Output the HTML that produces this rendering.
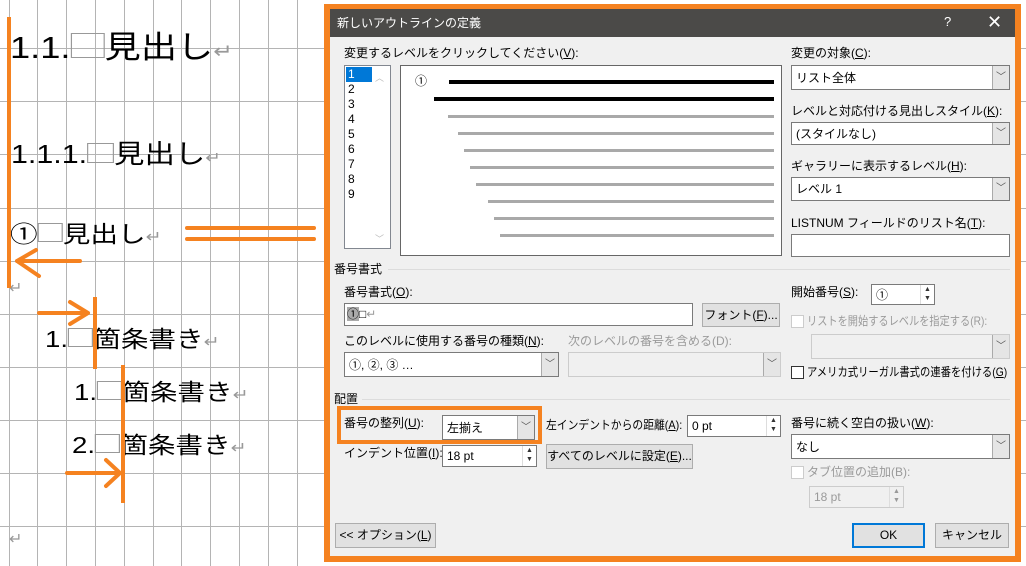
<!DOCTYPE html>
<html><head><meta charset="utf-8">
<style>
*{margin:0;padding:0;box-sizing:border-box}
body{width:1026px;height:566px;overflow:hidden;background:#fff;position:relative;font-family:"Liberation Sans","Noto Sans CJK JP",sans-serif}
.a{position:absolute}
.vl{position:absolute;top:0;width:1px;height:566px;background:#b4b4b4}
.hl{position:absolute;left:0;width:1026px;height:1px;background:#b4b4b4}
.o{position:absolute;background:#f58220}
.t{position:absolute;white-space:nowrap;line-height:1;color:#000;transform-origin:0 0}
.bx{display:inline-block;border:1px solid #999;vertical-align:baseline}
.rt{color:#999}
.d{position:absolute;font-size:12px;line-height:14px;white-space:nowrap;color:#000;transform-origin:0 0}
.dis{color:#9a9a9a}
.in{position:absolute;background:#fff;border:1px solid #7a7a7a}
.sel{position:absolute;background:#fff;border:1px solid #7a7a7a}
.sel .ar{position:absolute;right:0;top:0;bottom:0;width:17px;background:#e5e5e5;border-left:1px solid #aaa;font-size:10px;color:#555;text-align:center}
.sel .v{position:absolute;left:4px;top:50%;margin-top:-7px;font-size:12px;line-height:14px}
.btn{position:absolute;background:#e1e1e1;border:1px solid #adadad;font-size:12px;text-align:center}
.spin{position:absolute;background:#fff;border:1px solid #7a7a7a}
.spin .s{position:absolute;right:0;top:0;bottom:0;width:14px;border-left:1px solid #ddd;font-size:7px;line-height:9px;text-align:center;color:#333}
.cb{position:absolute;width:13px;height:13px;border:1px solid #333;background:#fff}
u{text-decoration:underline}
</style></head><body>
<!-- grid -->
<div class="vl" style="left:9px"></div><div class="vl" style="left:37px"></div><div class="vl" style="left:66px"></div><div class="vl" style="left:95px"></div><div class="vl" style="left:124px"></div><div class="vl" style="left:153px"></div><div class="vl" style="left:181px"></div><div class="vl" style="left:210px"></div><div class="vl" style="left:239px"></div><div class="vl" style="left:268px"></div><div class="vl" style="left:297px"></div>
<div class="hl" style="top:48px"></div><div class="hl" style="top:101px"></div><div class="hl" style="top:154px"></div><div class="hl" style="top:208px"></div><div class="hl" style="top:261px"></div><div class="hl" style="top:314px"></div><div class="hl" style="top:367px"></div><div class="hl" style="top:420px"></div><div class="hl" style="top:473px"></div><div class="hl" style="top:526px"></div>

<!-- left document text -->
<div class="t" style="left:10px;top:32px;font-size:31px;transform:scaleX(1.17)">1.1.<span class="bx" style="width:29px;height:25px"></span>見出し<span class="rt" style="font-size:20px">↵</span></div>
<div class="t" style="left:11px;top:141px;font-size:26px;transform:scaleX(1.17)">1.1.1.<span class="bx" style="width:23px;height:20px"></span>見出し<span class="rt" style="font-size:16px">↵</span></div>
<div class="t" style="left:10px;top:223px;font-size:23px;transform:scaleX(1.2)">①<span class="bx" style="width:21px;height:19px"></span>見出し<span class="rt" style="font-size:16px">↵</span></div>
<div class="t rt" style="left:9px;top:281px;font-size:16px">↵</div>
<div class="t" style="left:45px;top:328px;font-size:23px;transform:scaleX(1.2)">1.<span class="bx" style="width:21px;height:19px"></span>箇条書き<span class="rt" style="font-size:16px">↵</span></div>
<div class="t" style="left:74px;top:381px;font-size:23px;transform:scaleX(1.2)">1.<span class="bx" style="width:21px;height:19px"></span>箇条書き<span class="rt" style="font-size:16px">↵</span></div>
<div class="t" style="left:72px;top:434px;font-size:23px;transform:scaleX(1.2)">2.<span class="bx" style="width:21px;height:19px"></span>箇条書き<span class="rt" style="font-size:16px">↵</span></div>
<div class="t rt" style="left:9px;top:532px;font-size:16px">↵</div>

<!-- orange annotations -->
<div class="o" style="left:7px;top:17px;width:4px;height:271px"></div>
<div class="o" style="left:185px;top:226px;width:131px;height:4px;border-radius:2px"></div>
<div class="o" style="left:185px;top:237px;width:131px;height:4px;border-radius:2px"></div>
<svg class="a" style="left:0;top:0" width="330" height="566">
<g stroke="#f58220" stroke-width="4" fill="none" stroke-linecap="round">
<path d="M17 261 H80 M17 261 L36 250 M17 261 L39 276"/>
<path d="M39 313 H88 M88 313 L70 302 M88 313 L70 324"/>
<path d="M67 473 H120 M120 473 L106 460 M120 473 L106 486"/>
</g></svg>
<div class="o" style="left:93px;top:297px;width:4px;height:72px"></div>
<div class="o" style="left:121px;top:365px;width:4px;height:138px"></div>

<!-- dialog -->
<div class="o" style="left:324px;top:4px;width:697px;height:558px"></div>
<div class="a" style="left:330px;top:9px;width:685px;height:547px;background:#f0f0f0"></div>
<div class="a" style="left:330px;top:9px;width:685px;height:28px;background:#4b4a48"></div>
<div class="d" style="left:337px;top:16px;color:#fff">新しいアウトラインの定義</div>
<div class="d" style="left:944px;top:15px;color:#fff;font-size:13px">?</div>
<div class="d" style="left:987px;top:12px;color:#fff;font-size:18px;line-height:20px">✕</div>

<div class="d" style="left:344px;top:46px">変更するレベルをクリックしてください(<u>V</u>):</div>
<div class="a" style="left:344px;top:65px;width:47px;height:184px;background:#fff;border:1px solid #828790"></div>
<div class="a" style="left:346px;top:67px;width:26px;height:15px;background:#0078d7"></div>
<div class="d" style="left:348px;top:67px;line-height:15px;color:#fff">1</div>
<div class="d" style="left:348px;top:82px;line-height:15px">2<br>3<br>4<br>5<br>6<br>7<br>8<br>9</div>
<div class="d" style="left:375px;top:71px;font-size:9px;color:#bbb">︿</div>
<div class="d" style="left:375px;top:232px;font-size:9px;color:#bbb">﹀</div>

<div class="a" style="left:400px;top:65px;width:382px;height:191px;background:#fff;border:1px solid #666"></div>
<div class="d" style="left:415px;top:74px">①</div>
<div class="a" style="left:449px;top:80px;width:325px;height:4px;background:#000"></div>
<div class="a" style="left:434px;top:97px;width:340px;height:4px;background:#000"></div>
<div class="a" style="left:448px;top:115px;width:326px;height:3px;background:#a9a9a9"></div>
<div class="a" style="left:458px;top:132px;width:316px;height:3px;background:#a9a9a9"></div>
<div class="a" style="left:464px;top:149px;width:310px;height:3px;background:#a9a9a9"></div>
<div class="a" style="left:470px;top:166px;width:304px;height:3px;background:#a9a9a9"></div>
<div class="a" style="left:476px;top:183px;width:298px;height:3px;background:#a9a9a9"></div>
<div class="a" style="left:488px;top:200px;width:286px;height:3px;background:#a9a9a9"></div>
<div class="a" style="left:494px;top:217px;width:280px;height:3px;background:#a9a9a9"></div>
<div class="a" style="left:500px;top:234px;width:274px;height:3px;background:#a9a9a9"></div>

<div class="d" style="left:791px;top:46px">変更の対象(<u>C</u>):</div>
<div class="sel" style="left:791px;top:65px;width:219px;height:25px"><span class="v">リスト全体</span><span class="ar" style="line-height:23px">﹀</span></div>
<div class="d" style="left:791px;top:104px">レベルと対応付ける見出しスタイル(<u>K</u>):</div>
<div class="sel" style="left:791px;top:122px;width:219px;height:23px"><span class="v">(スタイルなし)</span><span class="ar" style="line-height:21px">﹀</span></div>
<div class="d" style="left:791px;top:159px">ギャラリーに表示するレベル(<u>H</u>):</div>
<div class="sel" style="left:791px;top:177px;width:219px;height:24px"><span class="v">レベル 1</span><span class="ar" style="line-height:22px">﹀</span></div>
<div class="d" style="left:791px;top:216px">LISTNUM フィールドのリスト名(<u>T</u>):</div>
<div class="in" style="left:791px;top:234px;width:219px;height:23px"></div>

<div class="d" style="left:334px;top:262px">番号書式</div>
<div class="a" style="left:388px;top:269px;width:622px;height:1px;background:#dcdcdc"></div>
<div class="d" style="left:344px;top:285px">番号書式(<u>O</u>):</div>
<div class="in" style="left:344px;top:303px;width:349px;height:23px"></div>
<div class="d" style="left:347px;top:307px"><span style="background:#aaa">①</span>□<span style="color:#999">↵</span></div>
<div class="btn" style="left:702px;top:303px;width:78px;height:24px;line-height:22px">フォント(<u>F</u>)...</div>
<div class="d" style="left:791px;top:285px">開始番号(<u>S</u>):</div>
<div class="spin" style="left:871px;top:284px;width:64px;height:21px"><span class="d" style="left:4px;top:3px">①</span><span class="s">▲<br>▼</span></div>
<div class="cb" style="left:791px;top:315px;border-color:#ccc"></div>
<div class="d dis" style="left:807px;top:314px;transform:scaleX(0.85)">リストを開始するレベルを指定する(R):</div>
<div class="sel" style="left:811px;top:334px;width:199px;height:25px;background:#f0f0f0;border-color:#ccc"><span class="ar" style="line-height:23px">﹀</span></div>
<div class="d" style="left:344px;top:334px">このレベルに使用する番号の種類(<u>N</u>):</div>
<div class="sel" style="left:344px;top:352px;width:215px;height:25px"><span class="v">①, ②, ③ …</span><span class="ar" style="line-height:23px">﹀</span></div>
<div class="d dis" style="left:568px;top:334px">次のレベルの番号を含める(D):</div>
<div class="sel" style="left:568px;top:352px;width:213px;height:25px;background:#f0f0f0;border-color:#ccc"><span class="ar" style="line-height:23px">﹀</span></div>
<div class="cb" style="left:791px;top:366px"></div>
<div class="d" style="left:807px;top:365px;transform:scaleX(0.86)">アメリカ式リーガル書式の連番を付ける(<u>G</u>)</div>

<div class="d" style="left:334px;top:392px">配置</div>
<div class="a" style="left:362px;top:399px;width:648px;height:1px;background:#dcdcdc"></div>
<div class="o" style="left:337px;top:406px;width:205px;height:38px"></div>
<div class="a" style="left:341px;top:410px;width:197px;height:30px;background:#f0f0f0"></div>
<div class="d" style="left:344px;top:416px">番号の整列(<u>U</u>):</div>
<div class="sel" style="left:442px;top:415px;width:93px;height:25px"><span class="v">左揃え</span><span class="ar" style="line-height:23px">﹀</span></div>
<div class="d" style="left:546px;top:418px;transform:scaleX(0.9)">左インデントからの距離(<u>A</u>):</div>
<div class="spin" style="left:687px;top:415px;width:94px;height:22px"><span class="d" style="left:4px;top:3px">0 pt</span><span class="s">▲<br>▼</span></div>
<div class="d" style="left:344px;top:446px">インデント位置(<u>I</u>):</div>
<div class="spin" style="left:442px;top:445px;width:95px;height:22px"><span class="d" style="left:4px;top:3px">18 pt</span><span class="s">▲<br>▼</span></div>
<div class="btn" style="left:546px;top:444px;width:147px;height:25px;line-height:23px">すべてのレベルに設定(<u>E</u>)...</div>
<div class="d" style="left:791px;top:416px">番号に続く空白の扱い(<u>W</u>):</div>
<div class="sel" style="left:791px;top:434px;width:219px;height:25px"><span class="v">なし</span><span class="ar" style="line-height:23px">﹀</span></div>
<div class="cb" style="left:791px;top:466px;border-color:#ccc"></div>
<div class="d dis" style="left:807px;top:465px">タブ位置の追加(B):</div>
<div class="spin" style="left:809px;top:486px;width:95px;height:22px;background:#f0f0f0;border-color:#ccc"><span class="d dis" style="left:4px;top:3px">18 pt</span><span class="s" style="color:#999">▲<br>▼</span></div>

<div class="btn" style="left:335px;top:523px;width:101px;height:25px;line-height:23px">&lt;&lt; オプション(<u>L</u>)</div>
<div class="btn" style="left:852px;top:523px;width:73px;height:25px;line-height:21px;border:2px solid #0078d7">OK</div>
<div class="btn" style="left:935px;top:523px;width:74px;height:25px;line-height:23px">キャンセル</div>
</body></html>
